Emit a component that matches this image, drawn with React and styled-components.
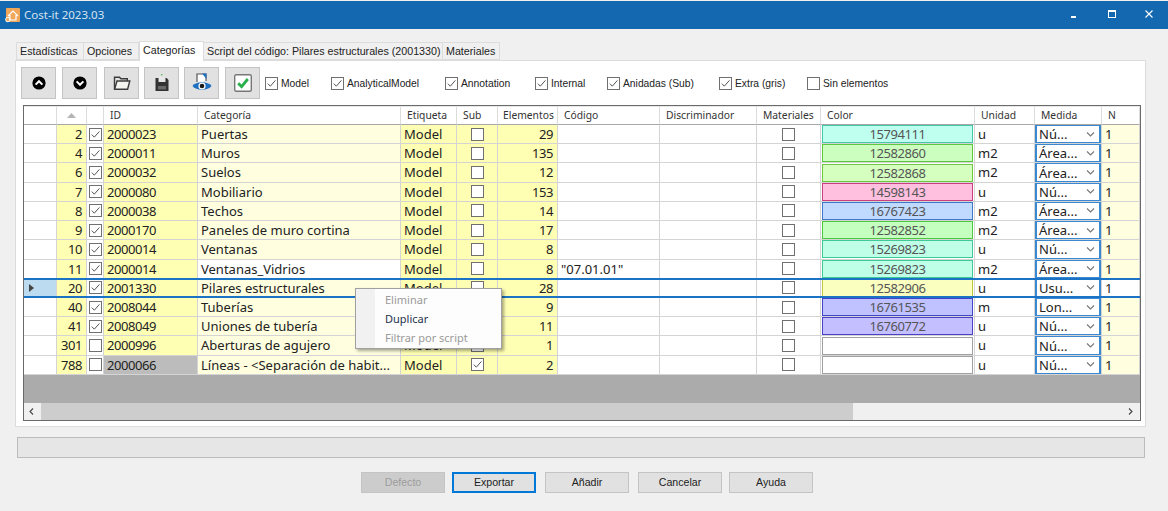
import React from "react";
import styled, { createGlobalStyle } from "styled-components";

const GlobalStyle = createGlobalStyle`
  html, body {
    margin: 0;
    padding: 0;
    background: #f0f0f0;
    overflow: hidden;
  }
`;

const COLUMNS = "33px 30px 17px 94px 203px 56px 41px 60px 102px 97px 64px 154px 60px 67px 38px";
const YELLOW = "#ffffb4";
const PALE = "#ffffe0";

const Window = styled.div`
  position: relative;
  width: 1168px;
  height: 511px;
  display: flex;
  flex-direction: column;
  background: #f0f0f0;
  font-family: "Liberation Sans", Arial, sans-serif;
  overflow: hidden;
`;

const TitleBar = styled.div`
  height: 28px;
  margin-top: 1px;
  flex: none;
  display: flex;
  align-items: center;
  background: #1368b0;
  color: #d5e3f1;
  font-family: "Noto Sans", sans-serif;
  font-size: 11.5px;
  padding: 0 1px 0 5px;
`;

const AppTitle = styled.span`
  margin-left: 4px;
  flex: 1;
  padding-bottom: 1px;
`;

const WinControl = styled.div`
  width: 37px;
  height: 28px;
  display: flex;
  align-items: center;
  justify-content: center;
  padding-bottom: 3px;
  box-sizing: border-box;
`;

const TabStrip = styled.div`
  display: flex;
  align-items: flex-end;
  height: 19px;
  margin: 12px 0 0 16px;
  flex: none;
`;

const Tab = styled.div`
  box-sizing: border-box;
  width: ${p => p.$w}px;
  height: ${p => (p.$active ? 20 : 18)}px;
  margin-bottom: ${p => (p.$active ? -1 : 0)}px;
  position: relative;
  z-index: ${p => (p.$active ? 2 : 1)};
  background: ${p => (p.$active ? "#fff" : "#f0f0f0")};
  border: 1px solid #dcdcdc;
  border-left-width: ${p => (p.$active ? 1 : 0)}px;
  border-bottom: ${p => (p.$active ? "none" : "1px solid #dcdcdc")};
  font-size: 10.7px;
  line-height: 16px;
  color: #222;
  padding-left: 3px;
  white-space: nowrap;
  &:first-child {
    border-left-width: 1px;
  }
`;

const Panel = styled.div`
  box-sizing: border-box;
  margin: 0 22px 0 15px;
  height: 367px;
  flex: none;
  background: #fff;
  border: 1px solid #dcdcdc;
  padding: 6px 0 0 5px;
  display: flex;
  flex-direction: column;
`;

const Toolbar = styled.div`
  display: flex;
  align-items: center;
  height: 32px;
`;

const ToolButton = styled.div`
  box-sizing: border-box;
  width: 35px;
  height: 32px;
  margin-right: ${p => p.$mr ?? 6}px;
  flex: none;
  background: #e1e1e1;
  border: 1px solid #c4c4c4;
  display: flex;
  align-items: center;
  justify-content: center;
`;

const Filter = styled.label`
  display: flex;
  align-items: center;
  flex: none;
  width: ${p => p.$w}px;
  font-size: 10.3px;
  color: #222;
`;

const FilterGroup = styled.div`
  display: flex;
  margin-left: -1px;
`;

const FilterText = styled.span`
  margin-left: 3px;
  white-space: nowrap;
`;

const BoxWrap = styled.span`
  box-sizing: border-box;
  display: inline-flex;
  width: 13px;
  height: 13px;
  flex: none;
  background: #fff;
  border: 1px solid #707070;
`;

const Grid = styled.div`
  box-sizing: border-box;
  width: 1118px;
  height: 316px;
  margin: 6px 0 0 2px;
  border: 1px solid #6a6a6a;
  display: flex;
  flex-direction: column;
  background: #ababab;
  flex: none;
`;

const HeaderRow = styled.div`
  display: grid;
  grid-template-columns: ${COLUMNS};
  height: 19px;
  flex: none;
  background: #fff;
  border-top: 1px solid #e8e8e8;
  box-sizing: border-box;
`;

const HeaderCell = styled.div`
  box-sizing: border-box;
  border-right: 1px solid #dcdcdc;
  border-bottom: 1px solid #a8a8a8;
  font-family: "Noto Sans", sans-serif;
  font-size: 10.3px;
  line-height: 17px;
  color: #333;
  padding-left: ${p => p.$pl ?? 6}px;
  white-space: nowrap;
  overflow: hidden;
  display: flex;
  align-items: center;
  justify-content: ${p => (p.$center ? "center" : "flex-start")};
`;

const Row = styled.div`
  display: grid;
  grid-template-columns: ${COLUMNS};
  height: 19.23px;
  flex: none;
  position: relative;
  &::after {
    content: "";
    display: ${p => (p.$selected ? "block" : "none")};
    position: absolute;
    left: 0;
    right: 0;
    top: -1px;
    bottom: 0;
    border-top: 2px solid #1a73c4;
    border-bottom: 2px solid #1a73c4;
    pointer-events: none;
  }
`;

const Cell = styled.div`
  box-sizing: border-box;
  min-width: 0;
  background: ${p => p.$bg || "#fff"};
  border-right: 1px solid #d4d4d4;
  border-bottom: 1px solid #d4d4d4;
  font-family: "Noto Sans", sans-serif;
  font-size: 13px;
  line-height: 19px;
  letter-spacing: ${p => (p.$digits ? "-0.42px" : "normal")};
  color: #222;
  padding: ${p => (p.$center ? "0" : p.$right ? "0 4px 0 0" : "0 0 0 3px")};
  text-align: ${p => (p.$right ? "right" : "left")};
  white-space: nowrap;
  overflow: hidden;
  display: ${p => (p.$center ? "flex" : "block")};
  align-items: center;
  justify-content: center;
`;

const HeadCell = styled(Cell)`
  padding: 0 0 0 5px;
  display: flex;
  align-items: center;
  justify-content: flex-start;
  background: ${p => (p.$selected ? "#bcdaf0" : "#fff")};
`;

const Swatch = styled.div`
  box-sizing: border-box;
  height: 18px;
  margin-left: 1px;
  width: 151px;
  border: 1px solid ${p => p.$border};
  background: ${p => p.$bg};
  color: #555;
  text-align: center;
  font-size: 13px;
  line-height: 16px;
  letter-spacing: -0.42px;
`;

const SwatchCell = styled(Cell)`
  padding: 0;
  display: flex;
  align-items: center;
  justify-content: flex-start;
`;

const ComboCell = styled(Cell)`
  padding: 0;
`;

const Combo = styled.div`
  box-sizing: border-box;
  height: 100%;
  border: 1px solid #3a89d0;
  border-width: 1px 2px;
  display: flex;
  align-items: center;
  justify-content: space-between;
  padding: 0 4px 0 2px;
  line-height: 16px;
  background: #fff;
`;

const GreyFill = styled.div`
  flex: 1;
  background: #ababab;
`;

const HScroll = styled.div`
  height: 17px;
  flex: none;
  display: flex;
  align-items: center;
  background: #f0f0f0;
  box-sizing: border-box;
`;

const ScrollArrow = styled.div`
  width: 17px;
  height: 17px;
  flex: none;
  display: flex;
  align-items: center;
  justify-content: center;
`;

const ScrollTrack = styled.div`
  flex: 1;
  height: 17px;
`;

const ScrollThumb = styled.div`
  width: 812px;
  height: 17px;
  background: #cdcdcd;
`;

const ProgressBar = styled.div`
  box-sizing: border-box;
  margin: 10px 23px 0 17px;
  height: 21px;
  flex: none;
  background: #e6e6e6;
  border: 1px solid #bcbcbc;
`;

const Footer = styled.div`
  display: flex;
  margin: 14px 0 0 361px;
  flex: none;
`;

const FooterButton = styled.div`
  box-sizing: border-box;
  width: 84px;
  height: 21px;
  margin-right: ${p => p.$mr}px;
  background: ${p => (p.$disabled ? "#cccccc" : "#e1e1e1")};
  border: ${p => (p.$primary ? "1px solid #0078d7" : "1px solid #c4c4c4")};
  box-shadow: ${p => (p.$primary ? "inset 0 0 0 1px #0078d7" : "none")};
  color: ${p => (p.$disabled ? "#9d9d9d" : "#222")};
  font-size: 10.6px;
  line-height: 19px;
  text-align: center;
`;

const ContextMenu = styled.div`
  position: absolute;
  left: 355px;
  top: 288px;
  width: 147px;
  height: 61px;
  box-sizing: border-box;
  background: linear-gradient(90deg, #f1f1f1 0, #f1f1f1 19px, #fdfdfd 19px);
  border: 1px solid #a0a0a0;
  box-shadow: 2px 2px 3px rgba(0, 0, 0, 0.35);
  padding-top: 1px;
  z-index: 5;
`;

const MenuItem = styled.div`
  height: 19px;
  line-height: 19px;
  padding-left: 29px;
  font-family: "Noto Sans", sans-serif;
  font-size: 11px;
  color: ${p => (p.$disabled ? "#9a9a9a" : "#26324a")};
  white-space: nowrap;
`;

const bgr = n => [n & 255, (n >> 8) & 255, (n >> 16) & 255];
const toCss = c => `rgb(${c.join(",")})`;
// the border is the cell colour with its contrast pushed up
const swatchColors = n => {
  if (!n) return { bg: "#fff", border: "#a0a0a0" };
  const c = bgr(n);
  return {
    bg: toCss(c),
    border: toCss(c.map(v => Math.round(64 + ((v - 191) / 64) * 136))),
  };
};

const rows = [
  { n: 2, on: true, id: "2000023", cat: "Puertas", el: 29, color: 15794111, unit: "u", med: "Nú..." },
  { n: 4, on: true, id: "2000011", cat: "Muros", el: 135, color: 12582860, unit: "m2", med: "Área..." },
  { n: 6, on: true, id: "2000032", cat: "Suelos", el: 12, color: 12582868, unit: "m2", med: "Área..." },
  { n: 7, on: true, id: "2000080", cat: "Mobiliario", el: 153, color: 14598143, unit: "u", med: "Nú..." },
  { n: 8, on: true, id: "2000038", cat: "Techos", el: 14, color: 16767423, unit: "m2", med: "Área..." },
  { n: 9, on: true, id: "2000170", cat: "Paneles de muro cortina", el: 17, color: 12582852, unit: "m2", med: "Área..." },
  { n: 10, on: true, id: "2000014", cat: "Ventanas", el: 8, color: 15269823, unit: "u", med: "Nú..." },
  { n: 11, on: true, id: "2000014", cat: "Ventanas_Vidrios", el: 8, color: 15269823, unit: "m2", med: "Área...", code: '"07.01.01"', white: true },
  { n: 20, on: true, id: "2001330", cat: "Pilares estructurales", el: 28, color: 12582906, unit: "u", med: "Usu...", selected: true },
  { n: 40, on: true, id: "2008044", cat: "Tuberías", el: 9, color: 16761535, unit: "m", med: "Lon..." },
  { n: 41, on: true, id: "2008049", cat: "Uniones de tubería", el: 11, color: 16760772, unit: "u", med: "Nú..." },
  { n: 301, on: false, id: "2000996", cat: "Aberturas de agujero", el: 1, unit: "u", med: "Nú..." },
  { n: 788, on: false, id: "2000066", cat: "Líneas - <Separación de habit...", el: 2, unit: "u", med: "Nú...", sub: true, grey: true },
];

const headers = [
  ["", 0], ["", 0, "sort"], ["", 0], ["ID", 6], ["Categoría", 6], ["Etiqueta", 6], ["Sub", 6], ["Elementos", 5],
  ["Código", 6], ["Discriminador", 6], ["Materiales", 6], ["Color", 6], ["Unidad", 6], ["Medida", 6], ["N", 6],
];

const filters = [
  ["Model", 66, true], ["AnalyticalModel", 114, true], ["Annotation", 90, true], ["Internal", 72, true],
  ["Anidadas (Sub)", 112, true], ["Extra (gris)", 88, true], ["Sin elementos", 90, false],
];

const footerButtons = [
  { label: "Defecto", disabled: true, mr: 7 },
  { label: "Exportar", primary: true, mr: 9 },
  { label: "Añadir", mr: 9 },
  { label: "Cancelar", mr: 7 },
  { label: "Ayuda", mr: 0 },
];

function Box({ checked }) {
  return (
    <BoxWrap>
      {checked && (
        <svg width="11" height="11" viewBox="0 0 11 11">
          <path d="M1.8 5.6 4.3 8.2 9.4 2.4" fill="none" stroke="#555" strokeWidth="1" />
        </svg>
      )}
    </BoxWrap>
  );
}

function CircleChevron({ up }) {
  return (
    <svg width="14" height="14" viewBox="0 0 14 14">
      <circle cx="7" cy="7" r="6.6" fill="#000" />
      <path
        d={up ? "M3.6 8.6 7 5.2 10.4 8.6" : "M3.6 5.4 7 8.8 10.4 5.4"}
        fill="none"
        stroke="#fff"
        strokeWidth="2"
      />
    </svg>
  );
}

function FolderIcon() {
  return (
    <svg width="18" height="16" viewBox="0 0 18 16">
      <path d="M1.5 14V2.2h5l1.4 1.6h6.4V6" fill="none" stroke="#3c3c3c" strokeWidth="1.4" />
      <path d="M1.6 14.2 4 6h12.8l-2.2 8.2z" fill="#f4f4f0" stroke="#3c3c3c" strokeWidth="1.4" />
    </svg>
  );
}

function SaveIcon() {
  return (
    <svg width="16" height="18" viewBox="0 0 16 18">
      <path d="M1.5 4h3v4h7V4h1.2L14.5 6v11h-13z" fill="#333" />
      <rect x="5" y="2.5" width="5.5" height="5" fill="#e8e8e8" />
      <rect x="7" y="0" width="1.4" height="1.4" fill="#5bbf5b" />
      <rect x="4" y="12" width="8" height="3.4" fill="#6a6a6a" />
    </svg>
  );
}

function EyeIcon() {
  return (
    <svg width="22" height="22" viewBox="0 0 22 22">
      <path d="M6 10V2h9v7" fill="#fff" stroke="#555" strokeWidth="1.2" />
      <path d="M11 1.5h4.5V7z" fill="#1f6fc0" />
      <path d="M1.5 14C5 9 17 9 20.5 14 17 19 5 19 1.5 14z" fill="#1f6fc0" />
      <circle cx="11" cy="14" r="3.6" fill="#fff" />
      <circle cx="11" cy="14" r="2.3" fill="#1a1a1a" />
    </svg>
  );
}

function CheckIcon() {
  return (
    <svg width="18" height="18" viewBox="0 0 18 18">
      <rect x="0.7" y="0.7" width="16.6" height="16.6" rx="1.5" fill="#fff" stroke="#777" strokeWidth="1.4" />
      <path d="M4.2 9.2 7.6 12.6 13.8 5" fill="none" stroke="#27b04b" strokeWidth="2.8" />
    </svg>
  );
}

function AppIcon() {
  return (
    <svg width="15" height="16" viewBox="0 0 15 16">
      <rect x="1" y="1" width="14" height="14" rx="1" fill="#f0a75a" />
      <path d="M3 9 8 4l5 5M5 8v5h6V8" fill="none" stroke="#fff" strokeWidth="1.2" />
      <circle cx="2.8" cy="12.6" r="2.2" fill="none" stroke="#fff" strokeWidth="1" />
    </svg>
  );
}

function Chevron({ dir }) {
  const d = {
    left: "M5 1.5 2 4.5 5 7.5",
    right: "M2 1.5 5 4.5 2 7.5",
    down: "M1 2.5 4.5 6 8 2.5",
  }[dir];
  return (
    <svg width="9" height="9" viewBox="0 0 9 9">
      <path d={d} fill="none" stroke={dir === "down" ? "#777" : "#444"} strokeWidth="1.1" />
    </svg>
  );
}

function App() {
  return (
    <Window>
      <GlobalStyle />
      <TitleBar>
        <AppIcon />
        <AppTitle>Cost-it 2023.03</AppTitle>
        <WinControl>
          <svg width="10" height="10" viewBox="0 0 10 10">
            <rect x="1" y="7" width="5" height="2" fill="#fff" />
          </svg>
        </WinControl>
        <WinControl>
          <svg width="10" height="10" viewBox="0 0 10 10">
            <rect x="1.5" y="1.5" width="7" height="7" fill="none" stroke="#fff" />
            <rect x="1" y="1" width="8" height="2" fill="#fff" />
          </svg>
        </WinControl>
        <WinControl>
          <svg width="10" height="10" viewBox="0 0 10 10">
            <path d="M1.5 1.5l7 7M8.5 1.5l-7 7" stroke="#fff" strokeWidth="1.1" />
          </svg>
        </WinControl>
      </TitleBar>

      <TabStrip>
        <Tab $w={68}>Estadísticas</Tab>
        <Tab $w={55}>Opciones</Tab>
        <Tab $w={65} $active>Categorías</Tab>
        <Tab $w={239}>Script del código: Pilares estructurales (2001330)</Tab>
        <Tab $w={57}>Materiales</Tab>
      </TabStrip>

      <Panel>
        <Toolbar>
          <ToolButton><CircleChevron up /></ToolButton>
          <ToolButton $mr={7}><CircleChevron /></ToolButton>
          <ToolButton $mr={5}><FolderIcon /></ToolButton>
          <ToolButton $mr={5}><SaveIcon /></ToolButton>
          <ToolButton><EyeIcon /></ToolButton>
          <ToolButton><CheckIcon /></ToolButton>
          <FilterGroup>
            {filters.map(([label, w, checked]) => (
              <Filter key={label} $w={w}>
                <Box checked={checked} />
                <FilterText>{label}</FilterText>
              </Filter>
            ))}
          </FilterGroup>
        </Toolbar>

        <Grid>
          <HeaderRow>
            {headers.map(([label, pl, kind], i) => (
              <HeaderCell key={i} $pl={pl} $center={kind === "sort"}>
                {kind === "sort" ? (
                  <svg width="9" height="5" viewBox="0 0 9 5">
                    <path d="M4.5 0 9 5H0z" fill="#b4b4b4" />
                  </svg>
                ) : (
                  label
                )}
              </HeaderCell>
            ))}
          </HeaderRow>

          {rows.map(r => {
            const swatch = swatchColors(r.color);
            return (
              <Row key={r.n} $selected={r.selected}>
                <HeadCell $selected={r.selected}>
                  {r.selected && (
                    <svg width="5" height="8" viewBox="0 0 5 8">
                      <path d="M0 0 5 4 0 8z" fill="#444" />
                    </svg>
                  )}
                </HeadCell>
                <Cell $bg={YELLOW} $right $digits>{r.n}</Cell>
                <Cell $center><Box checked={r.on} /></Cell>
                <Cell $bg={r.grey ? "#bcbcbc" : YELLOW} $digits>{r.id}</Cell>
                <Cell $bg={r.white ? "#fff" : PALE}>{r.cat}</Cell>
                <Cell $bg={YELLOW}>Model</Cell>
                <Cell $bg={YELLOW} $center><Box checked={r.sub} /></Cell>
                <Cell $bg={YELLOW} $right $digits>{r.el}</Cell>
                <Cell>{r.code}</Cell>
                <Cell />
                <Cell $center><Box /></Cell>
                <SwatchCell>
                  <Swatch $bg={swatch.bg} $border={swatch.border}>{r.color}</Swatch>
                </SwatchCell>
                <Cell>{r.unit}</Cell>
                <ComboCell>
                  <Combo>
                    {r.med}
                    <Chevron dir="down" />
                  </Combo>
                </ComboCell>
                <Cell $bg={r.selected ? "#fff" : PALE}>1</Cell>
              </Row>
            );
          })}

          <GreyFill />
          <HScroll>
            <ScrollArrow><Chevron dir="left" /></ScrollArrow>
            <ScrollTrack><ScrollThumb /></ScrollTrack>
            <ScrollArrow><Chevron dir="right" /></ScrollArrow>
          </HScroll>
        </Grid>
      </Panel>

      <ProgressBar />

      <Footer>
        {footerButtons.map(b => (
          <FooterButton key={b.label} $disabled={b.disabled} $primary={b.primary} $mr={b.mr}>
            {b.label}
          </FooterButton>
        ))}
      </Footer>

      <ContextMenu>
        <MenuItem $disabled>Eliminar</MenuItem>
        <MenuItem>Duplicar</MenuItem>
        <MenuItem $disabled>Filtrar por script</MenuItem>
      </ContextMenu>
    </Window>
  );
}

export default App;
